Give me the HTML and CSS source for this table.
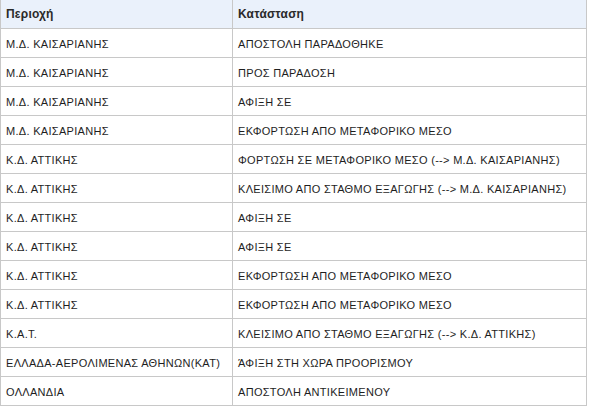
FILE: index.html
```html
<!DOCTYPE html>
<html lang="el">
<head>
<meta charset="utf-8">
<title>Ιστορικό αποστολής</title>
<link rel="stylesheet" href="styles.css">
</head>
<body>
<table class="track">
  <thead>
    <tr><th class="c1">Περιοχή</th><th class="c2">Κατάσταση</th></tr>
  </thead>
  <tbody>
    <tr><td>Μ.Δ. ΚΑΙΣΑΡΙΑΝΗΣ</td><td>ΑΠΟΣΤΟΛΗ ΠΑΡΑΔΟΘΗΚΕ</td></tr>
    <tr><td>Μ.Δ. ΚΑΙΣΑΡΙΑΝΗΣ</td><td>ΠΡΟΣ ΠΑΡΑΔΟΣΗ</td></tr>
    <tr><td>Μ.Δ. ΚΑΙΣΑΡΙΑΝΗΣ</td><td>ΑΦΙΞΗ ΣΕ</td></tr>
    <tr><td>Μ.Δ. ΚΑΙΣΑΡΙΑΝΗΣ</td><td>ΕΚΦΟΡΤΩΣΗ ΑΠΟ ΜΕΤΑΦΟΡΙΚΟ ΜΕΣΟ</td></tr>
    <tr><td>Κ.Δ. ΑΤΤΙΚΗΣ</td><td>ΦΟΡΤΩΣΗ ΣΕ ΜΕΤΑΦΟΡΙΚΟ ΜΕΣΟ (--&gt; Μ.Δ. ΚΑΙΣΑΡΙΑΝΗΣ)</td></tr>
    <tr><td>Κ.Δ. ΑΤΤΙΚΗΣ</td><td>ΚΛΕΙΣΙΜΟ ΑΠΟ ΣΤΑΘΜΟ ΕΞΑΓΩΓΗΣ (--&gt; Μ.Δ. ΚΑΙΣΑΡΙΑΝΗΣ)</td></tr>
    <tr><td>Κ.Δ. ΑΤΤΙΚΗΣ</td><td>ΑΦΙΞΗ ΣΕ</td></tr>
    <tr><td>Κ.Δ. ΑΤΤΙΚΗΣ</td><td>ΑΦΙΞΗ ΣΕ</td></tr>
    <tr><td>Κ.Δ. ΑΤΤΙΚΗΣ</td><td>ΕΚΦΟΡΤΩΣΗ ΑΠΟ ΜΕΤΑΦΟΡΙΚΟ ΜΕΣΟ</td></tr>
    <tr><td>Κ.Δ. ΑΤΤΙΚΗΣ</td><td>ΕΚΦΟΡΤΩΣΗ ΑΠΟ ΜΕΤΑΦΟΡΙΚΟ ΜΕΣΟ</td></tr>
    <tr><td>Κ.Α.Τ.</td><td>ΚΛΕΙΣΙΜΟ ΑΠΟ ΣΤΑΘΜΟ ΕΞΑΓΩΓΗΣ (--&gt; Κ.Δ. ΑΤΤΙΚΗΣ)</td></tr>
    <tr><td>ΕΛΛΑΔΑ-ΑΕΡΟΛΙΜΕΝΑΣ ΑΘΗΝΩΝ(ΚΑΤ)</td><td>ΆΦΙΞΗ ΣΤΗ ΧΩΡΑ ΠΡΟΟΡΙΣΜΟΥ</td></tr>
    <tr><td>ΟΛΛΑΝΔΙΑ</td><td>ΑΠΟΣΤΟΛΗ ΑΝΤΙΚΕΙΜΕΝΟΥ</td></tr>
  </tbody>
</table>
</body>
</html>
```
FILE: styles.css
```css
html, body {
  margin: 0;
  padding: 0;
  background: #ffffff;
}
.track {
  border-collapse: collapse;
  width: 587px;
  table-layout: fixed;
  font-family: "Liberation Sans", Arial, sans-serif;
  font-size: 11px;
  letter-spacing: 0.3px;
  color: #1e1e1e;
}
.track th,
.track td {
  border: 1px solid #c8c8c8;
  height: 28px;
  padding: 2px 4px 0 5px;
  text-align: left;
  vertical-align: middle;
  white-space: nowrap;
  box-sizing: border-box;
}
.track thead th {
  border-top: none;
  background: #eaf1fb;
  font-size: 12px;
  letter-spacing: 0.2px;
  font-weight: bold;
  color: #2a2a2a;
  height: 28px;
  padding-top: 0;
}
.track .c1 {
  width: 232px;
}
.track tbody td {
  height: 29px;
}
```
